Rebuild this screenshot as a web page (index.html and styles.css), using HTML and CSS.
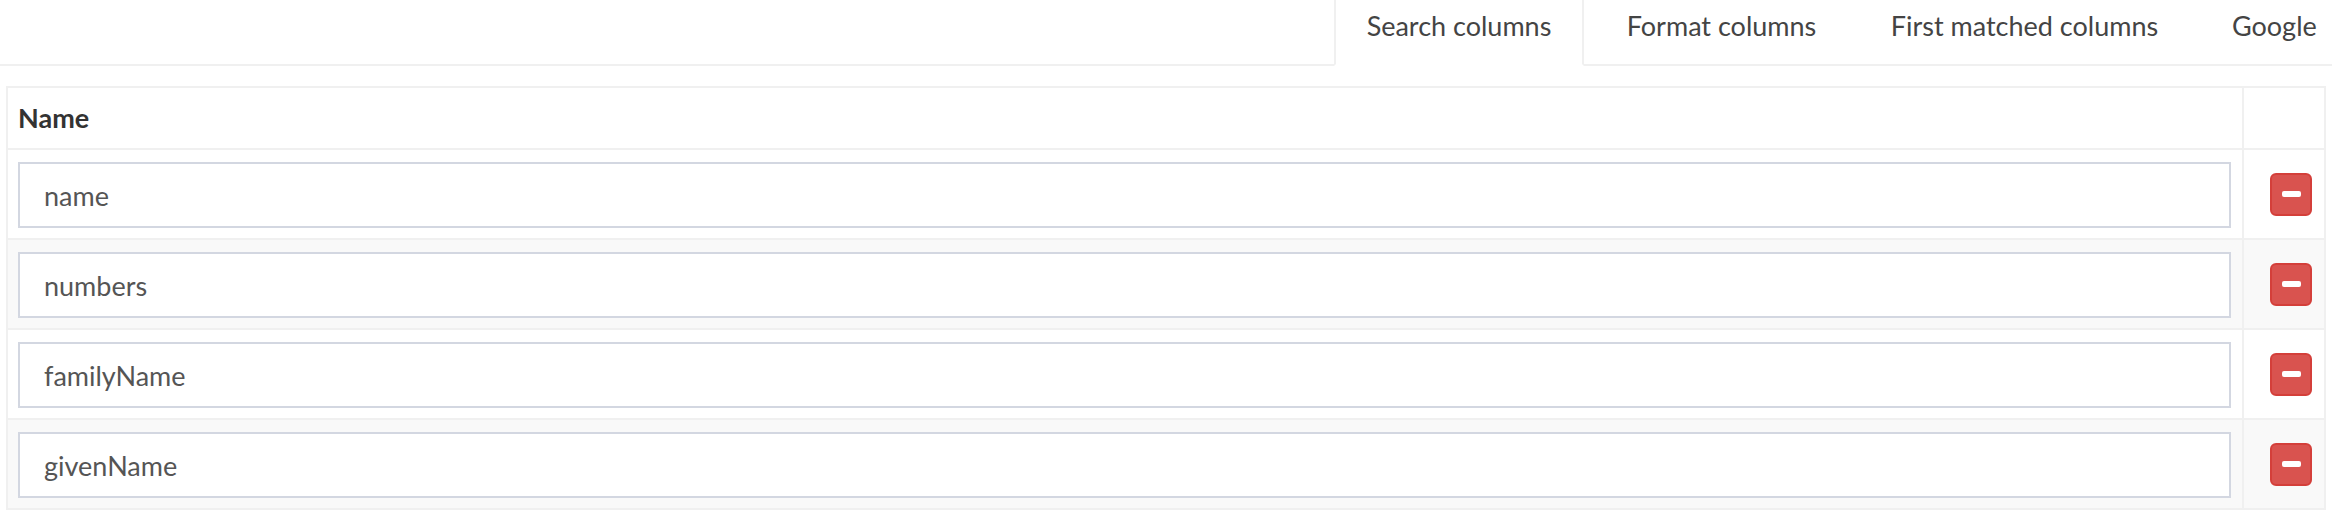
FILE: index.html
```html
<!DOCTYPE html>
<html lang="en">
<head>
<meta charset="utf-8">
<title>Columns</title>
<link rel="stylesheet" href="styles.css">
</head>
<body>
<div class="page">
  <nav class="tabs">
    <a class="tab tab-search active">Search columns</a>
    <a class="tab tab-format">Format columns</a>
    <a class="tab tab-first">First matched columns</a>
    <a class="tab tab-google">Google</a>
  </nav>
  <div class="table-wrap">
    <table class="cols">
      <thead>
        <tr><th class="c-name">Name</th><th class="c-act"></th></tr>
      </thead>
      <tbody>
        <tr>
          <td class="c-name"><input class="field" type="text" value="name"></td>
          <td class="c-act"><button class="remove" type="button"><span class="bar"></span></button></td>
        </tr>
        <tr>
          <td class="c-name"><input class="field" type="text" value="numbers"></td>
          <td class="c-act"><button class="remove" type="button"><span class="bar"></span></button></td>
        </tr>
        <tr>
          <td class="c-name"><input class="field" type="text" value="familyName"></td>
          <td class="c-act"><button class="remove" type="button"><span class="bar"></span></button></td>
        </tr>
        <tr>
          <td class="c-name"><input class="field" type="text" value="givenName"></td>
          <td class="c-act"><button class="remove" type="button"><span class="bar"></span></button></td>
        </tr>
      </tbody>
    </table>
  </div>
</div>
</body>
</html>
```

FILE: styles.css
```css
* { box-sizing: border-box; }
html, body {
  margin: 0;
  padding: 0;
  background: #ffffff;
  overflow: hidden;
}
body {
  font-family: Lato, "Liberation Sans", sans-serif;
  font-size: 27px;
  line-height: 40px;
  color: #333333;
}
.page { width: 2332px; }

.tabs {
  display: flex;
  justify-content: flex-end;
  height: 66px;
  border-bottom: 2px solid #f0f0f0;
}
.tab {
  display: block;
  height: 66px;
  margin-bottom: -2px;
  margin-left: 4px;
  padding-top: 6px;
  text-align: center;
  color: #444444;
  border-left: 2px solid transparent;
  border-right: 2px solid transparent;
  border-bottom: 2px solid transparent;
  white-space: nowrap;
}
.tab.active {
  border-left-color: #f0f0f0;
  border-right-color: #f0f0f0;
  border-bottom-color: #ffffff;
  background: #ffffff;
}
.tab-search { width: 250px; margin-left: 0; }
.tab-format { width: 267px; }
.tab-first { width: 331px; }
.tab-google { width: 138px; text-align: left; padding-left: 36px; }

.table-wrap { padding: 20px 6px 0 6px; }
.cols {
  width: 100%;
  border-collapse: separate;
  border-spacing: 0;
  border: 2px solid #f0f0f0;
}
.cols th {
  text-align: left;
  font-weight: 700;
  color: #333333;
  padding: 10px 10px 10px 10px;
  height: 60px;
}
.cols th.c-act,
.cols td.c-act { width: 82px; border-left: 2px solid #f0f0f0; }
.cols td {
  border-top: 2px solid #f0f0f0;
  padding: 12px 11px 10px 10px;
  vertical-align: middle;
}
.cols tbody tr:nth-child(even) td { background: #f9f9f9; }
.cols td.c-act { padding: 0 12px 0 26px; }

.field {
  display: block;
  width: 100%;
  height: 66px;
  margin: 0;
  padding: 0 24px;
  border: 2px solid #d3d7e1;
  border-radius: 0;
  background: #ffffff;
  font-family: Lato, "Liberation Sans", sans-serif;
  font-size: 27px;
  color: #555555;
  outline: none;
}

.remove {
  display: flex;
  align-items: center;
  justify-content: center;
  width: 42px;
  height: 43px;
  padding: 0;
  margin: 0;
  background: #d9534f;
  border: 2px solid #d43f3a;
  border-radius: 6px;
  cursor: pointer;
}
.bar {
  display: block;
  width: 19px;
  height: 6px;
  border-radius: 2px;
  background: #ffffff;
}
```
